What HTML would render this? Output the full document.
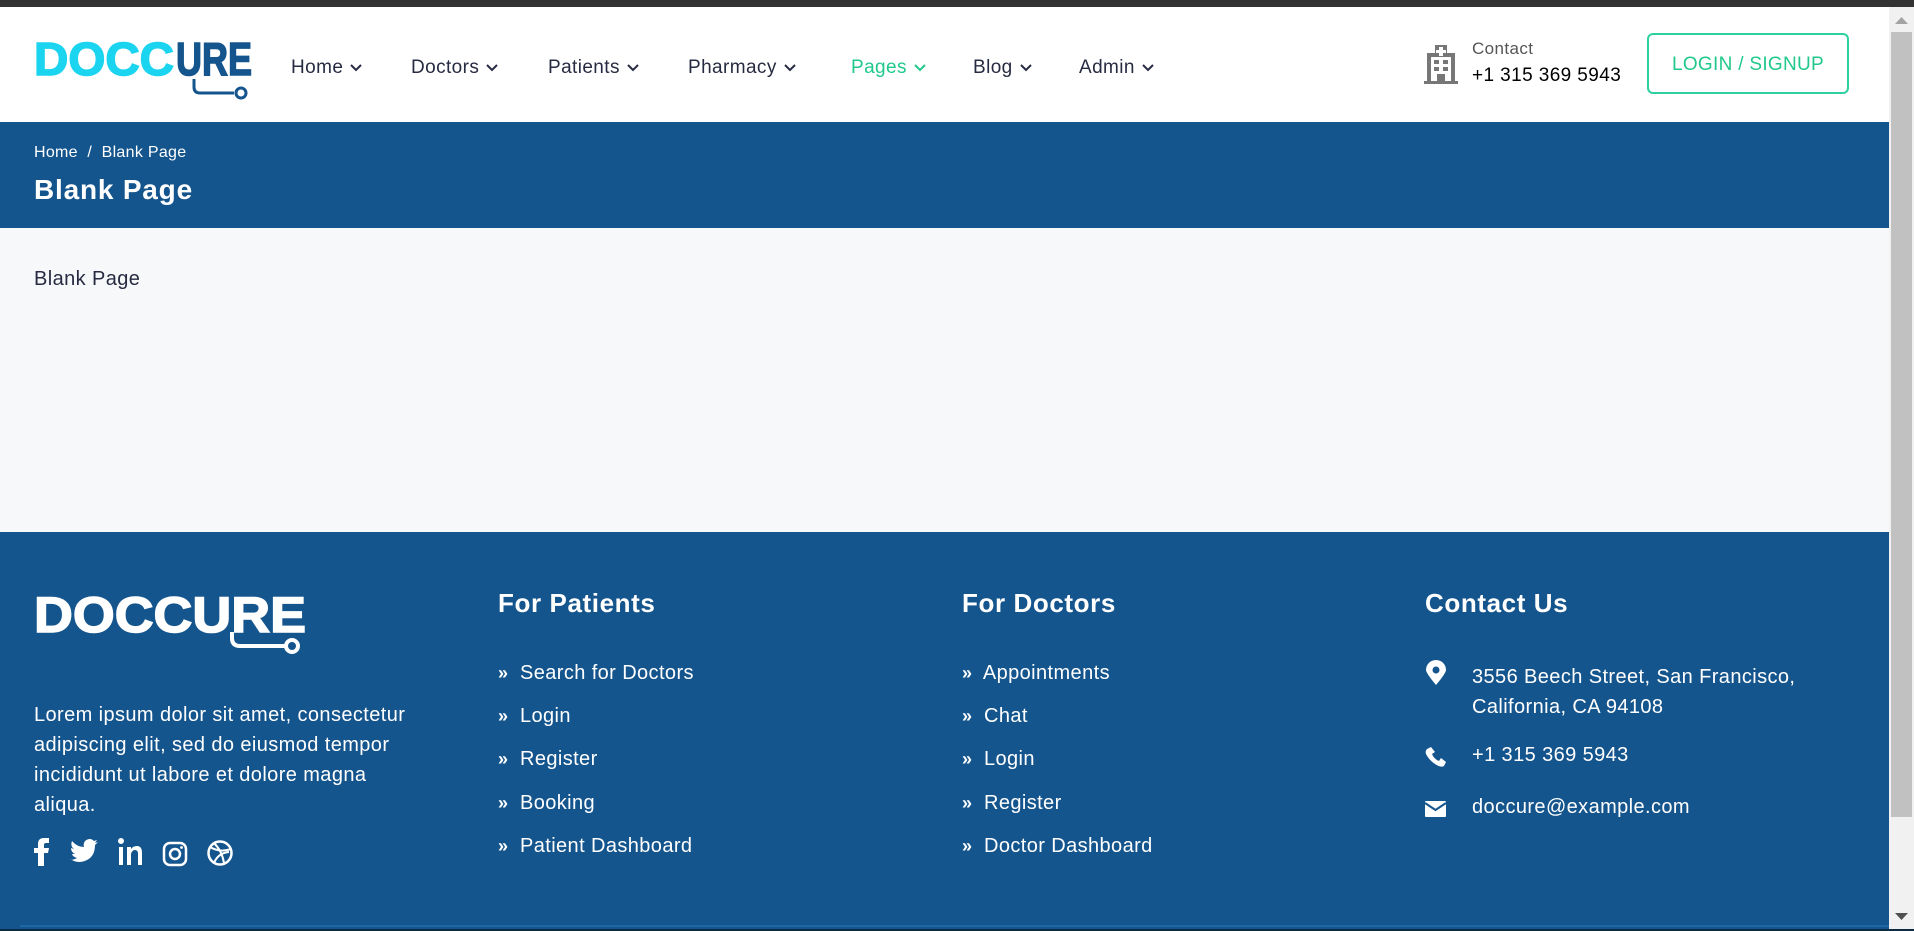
<!DOCTYPE html>
<html><head><meta charset="utf-8">
<style>
*{margin:0;padding:0;box-sizing:border-box}
html,body{width:1914px;height:931px;overflow:hidden;font-family:"Liberation Sans",sans-serif;background:#f7f8fa;position:relative}
.abs{position:absolute}
#top{left:0;top:0;width:1914px;height:7px;background:#333}
#hdr{left:0;top:7px;width:1889px;height:115px;background:#fff}
.nav{top:50px;font-size:19px;color:#272b41;white-space:nowrap;letter-spacing:0.4px}
.nav svg{vertical-align:middle;margin-left:6px}
#banner{left:0;top:122px;width:1889px;height:106px;background:#15558d;color:#fff}
#footer{left:0;top:532px;width:1889px;height:397px;background:#15558d;color:#fff}
.fh{font-size:26px;font-weight:bold;top:56px;letter-spacing:0.6px}
.fl{font-size:20px;white-space:nowrap;letter-spacing:0.4px}
.fl b{font-size:18px;margin-right:9px;letter-spacing:-3px}
#sb{left:1889px;top:7px;width:25px;height:922px;background:#f1f1f1}
</style></head><body>
<div id="top" class="abs"></div>
<div id="hdr" class="abs">
 <svg class="abs" style="left:34px;top:28px" width="222" height="66" viewBox="0 0 222 66">
  <text x="0" y="40" font-family="Liberation Sans" font-weight="900" font-size="46" fill="#1ad4f0" textLength="140" lengthAdjust="spacingAndGlyphs" stroke="#1ad4f0" stroke-width="1.5">DOCC</text>
  <text x="142" y="40" font-family="Liberation Sans" font-weight="900" font-size="46" fill="#15558d" textLength="76" lengthAdjust="spacingAndGlyphs" stroke="#15558d" stroke-width="1.5">URE</text>
  <path d="M160 44 v8 q0 6 6 6 h34" stroke="#15558d" stroke-width="3" fill="none"/>
  <circle cx="207" cy="58" r="5" fill="none" stroke="#15558d" stroke-width="3"/>
 </svg>
 <div class="abs nav" style="left:291px">Home<svg width="14" height="10"><path d="M2 2l5 5 5-5" stroke="#272b41" stroke-width="2" fill="none"/></svg></div>
 <div class="abs nav" style="left:411px">Doctors<svg width="14" height="10"><path d="M2 2l5 5 5-5" stroke="#272b41" stroke-width="2" fill="none"/></svg></div>
 <div class="abs nav" style="left:548px">Patients<svg width="14" height="10"><path d="M2 2l5 5 5-5" stroke="#272b41" stroke-width="2" fill="none"/></svg></div>
 <div class="abs nav" style="left:688px">Pharmacy<svg width="14" height="10"><path d="M2 2l5 5 5-5" stroke="#272b41" stroke-width="2" fill="none"/></svg></div>
 <div class="abs nav" style="left:851px;color:#20c98b">Pages<svg width="14" height="10"><path d="M2 2l5 5 5-5" stroke="#20c98b" stroke-width="2" fill="none"/></svg></div>
 <div class="abs nav" style="left:973px">Blog<svg width="14" height="10"><path d="M2 2l5 5 5-5" stroke="#272b41" stroke-width="2" fill="none"/></svg></div>
 <div class="abs nav" style="left:1079px">Admin<svg width="14" height="10"><path d="M2 2l5 5 5-5" stroke="#272b41" stroke-width="2" fill="none"/></svg></div>
 <svg class="abs" style="left:1423px;top:36px" width="36" height="42" viewBox="0 0 36 42">
  <path d="M4 10h8v-8h12v8h8v28h3v3H1v-3h3z" fill="#777"/>
  <rect x="8" y="14" width="20" height="24" fill="#fff"/>
  <path d="M16 4h4v3h3v3h-3v3h-4v-3h-3V7h3z" fill="#fff"/>
  <rect x="11" y="17" width="5" height="4" fill="#777"/><rect x="20" y="17" width="5" height="4" fill="#777"/>
  <rect x="11" y="24" width="5" height="4" fill="#777"/><rect x="20" y="24" width="5" height="4" fill="#777"/>
  <rect x="14" y="31" width="8" height="7" fill="#777"/>
 </svg>
 <div class="abs" style="left:1472px;top:32px;font-size:17px;color:#555;letter-spacing:0.4px">Contact</div>
 <div class="abs" style="left:1472px;top:58px;font-size:19px;color:#000;letter-spacing:0.4px">+1 315 369 5943</div>
 <div class="abs" style="left:1647px;top:26px;width:202px;height:61px;border:2px solid #2ed0a0;border-radius:6px;color:#20c98b;font-size:19px;text-align:center;line-height:59px;letter-spacing:0.3px">LOGIN / SIGNUP</div>
</div>
<div id="banner" class="abs">
 <div class="abs" style="left:34px;top:22px;font-size:16px;letter-spacing:0.3px">Home &nbsp;/&nbsp; Blank Page</div>
 <div class="abs" style="left:34px;top:52px;font-size:28px;font-weight:bold;letter-spacing:0.8px">Blank Page</div>
</div>
<div class="abs" style="left:34px;top:268px;font-size:20px;color:#272b41;letter-spacing:0.4px">Blank Page</div>
<div id="footer" class="abs">
 <svg class="abs" style="left:34px;top:54px" width="275" height="72" viewBox="0 0 275 72">
  <text x="0" y="46" font-family="Liberation Sans" font-weight="bold" font-size="50" fill="#fff" stroke="#fff" stroke-width="1.5" textLength="272" lengthAdjust="spacingAndGlyphs">DOCCURE</text>
  <path d="M198 46 v6 q0 8 8 8 h46" stroke="#fff" stroke-width="4" fill="none"/>
  <circle cx="258" cy="60" r="6" fill="none" stroke="#fff" stroke-width="4"/>
 </svg>
 <div class="abs" style="left:34px;top:168px;width:460px;font-size:20px;line-height:30px;letter-spacing:0.4px;white-space:nowrap">Lorem ipsum dolor sit amet, consectetur<br>adipiscing elit, sed do eiusmod tempor<br>incididunt ut labore et dolore magna<br>aliqua.</div>
 <svg class="abs" style="left:34px;top:305px" width="210" height="30" viewBox="0 0 210 30">
  <path d="M4 29V16H0v-5h4V7q0-6 6-6h5v5h-3q-2 0-2 2v3h5l-1 5h-4v13z" fill="#fff"/>
  <path d="M38 23q7 4 15 0q8-4 8-15l3-3-3 1 2-3-3 1q-4-4-9 0q-2 3-1 6q-7 0-12-6q-2 5 2 8l-3-1q0 4 4 6h-3q1 3 5 4q-3 2-8 2z" fill="#fff"/>
  <path d="M85 10h4v18h-4zM84 4a3 3 0 1 0 6 0a3 3 0 1 0-6 0M93 10h4v2q2-3 6-3q5 0 5 7v12h-4V17q0-4-3-4t-4 4v11h-4z" fill="#fff"/>
  <rect x="130" y="6" width="22" height="22" rx="6" fill="none" stroke="#fff" stroke-width="2.5"/>
  <circle cx="141" cy="17" r="5" fill="none" stroke="#fff" stroke-width="2.5"/><circle cx="147.5" cy="10.5" r="1.4" fill="#fff"/>
  <circle cx="186" cy="16" r="11.5" fill="none" stroke="#fff" stroke-width="2.5"/>
  <path d="M176 10q10 6 21 2M180 26q4-10 15-11M180 6q8 8 10 20" fill="none" stroke="#fff" stroke-width="2"/>
 </svg>
 <div class="abs fh" style="left:498px">For Patients</div>
 <div class="abs fh" style="left:962px">For Doctors</div>
 <div class="abs fh" style="left:1425px">Contact Us</div>
 <div class="abs fl" style="left:498px;top:130px"><b>»</b> Search for Doctors</div>
 <div class="abs fl" style="left:498px;top:173px"><b>»</b> Login</div>
 <div class="abs fl" style="left:498px;top:216px"><b>»</b> Register</div>
 <div class="abs fl" style="left:498px;top:260px"><b>»</b> Booking</div>
 <div class="abs fl" style="left:498px;top:303px"><b>»</b> Patient Dashboard</div>
 <div class="abs fl" style="left:962px;top:130px"><b>»</b> Appointments</div>
 <div class="abs fl" style="left:962px;top:173px"><b>»</b> Chat</div>
 <div class="abs fl" style="left:962px;top:216px"><b>»</b> Login</div>
 <div class="abs fl" style="left:962px;top:260px"><b>»</b> Register</div>
 <div class="abs fl" style="left:962px;top:303px"><b>»</b> Doctor Dashboard</div>
 <svg class="abs" style="left:1425px;top:128px" width="22" height="26" viewBox="0 0 22 26"><path d="M11 25q-10-12-10-15a10 10 0 0 1 20 0q0 3-10 15z" fill="#fff"/><circle cx="11" cy="10" r="3.5" fill="#15558d"/></svg>
 <div class="abs fl" style="left:1472px;top:130px;line-height:30px">3556 Beech Street, San Francisco,<br>California, CA 94108</div>
 <svg class="abs" style="left:1425px;top:214px" width="22" height="22" viewBox="0 0 22 22"><path d="M2 3l4-2 4 5-3 2q2 5 7 7l2-3 5 4-2 4q-3 2-9-2q-6-4-9-10q-1-3 1-5z" fill="#fff"/></svg>
 <div class="abs fl" style="left:1472px;top:212px">+1 315 369 5943</div>
 <svg class="abs" style="left:1425px;top:268px" width="22" height="18" viewBox="0 0 22 18"><rect x="0" y="1" width="21" height="16" rx="1" fill="#fff"/><path d="M0 3l10.5 7L21 3" stroke="#15558d" stroke-width="2" fill="none"/></svg>
 <div class="abs fl" style="left:1472px;top:264px">doccure@example.com</div>
 <div class="abs" style="left:20px;top:393px;width:1869px;height:2px;background:#1d67a5"></div>
</div>
<div class="abs" style="left:0;top:929px;width:1914px;height:2px;background:#0d2a44"></div>
<div id="sb" class="abs">
 <svg class="abs" style="left:6px;top:10px" width="13" height="8"><path d="M0 7L6.5 0L13 7z" fill="#a3a3a3"/></svg>
 <div class="abs" style="left:2px;top:25px;width:21px;height:785px;background:#c1c1c1"></div>
 <svg class="abs" style="left:6px;top:906px" width="13" height="8"><path d="M0 0L6.5 7L13 0z" fill="#505050"/></svg>
</div>
</body></html>
